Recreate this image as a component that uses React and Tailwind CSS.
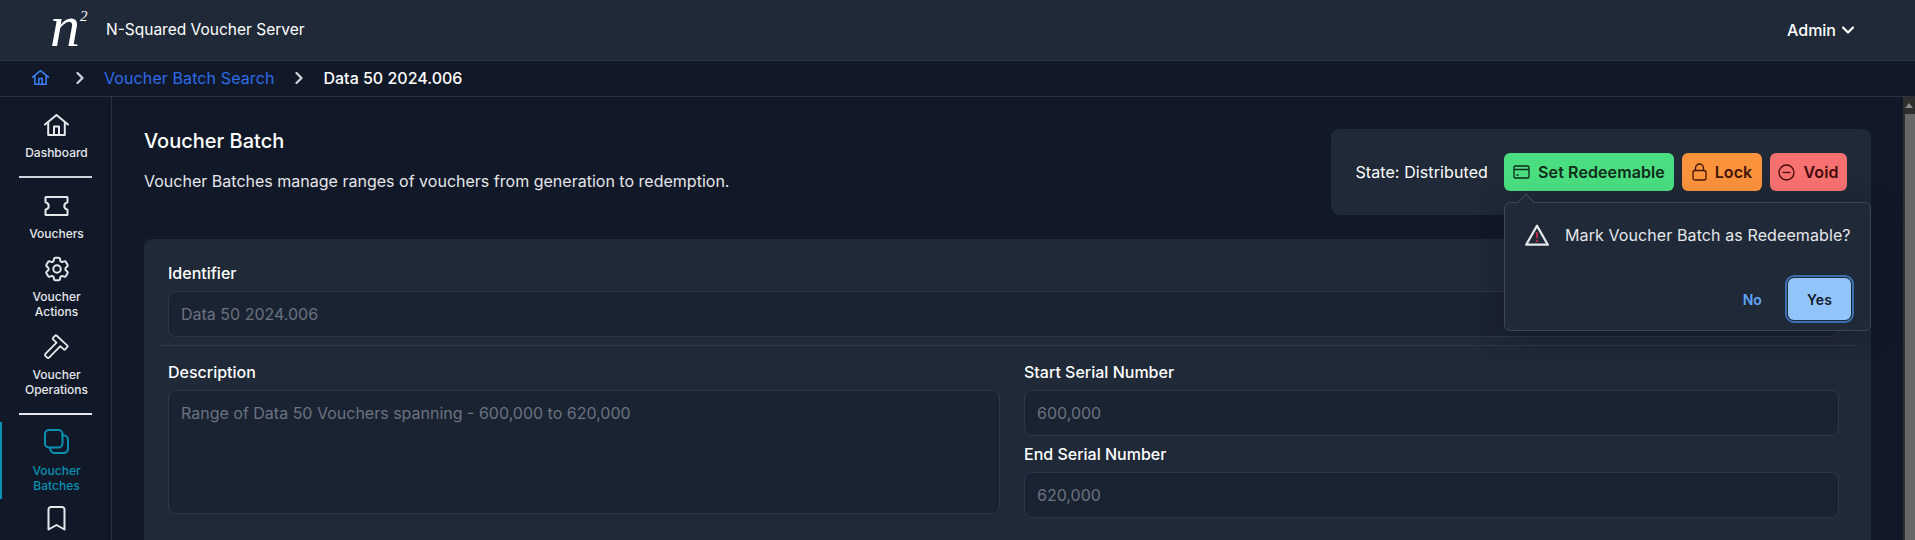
import React from "react";
import { HiOutlineCog6Tooth } from "react-icons/hi2";

function Home({ className, sw = 2 }) {
  return (
    <svg viewBox="0 0 25 22" fill="none" stroke="currentColor" strokeWidth={sw} strokeLinejoin="round" strokeLinecap="round" className={className}>
      <path d="M1 10.5 12.5 1 24 10.5" />
      <path d="M4.2 8.5V21h16.6V8.5" />
      <path d="M10 21v-8.5h5V21" />
    </svg>
  );
}
function Ticket({ className }) {
  return (
    <svg viewBox="0 0 25 20" fill="none" stroke="currentColor" strokeWidth="2" strokeLinejoin="round" className={className}>
      <path d="M2 1h21a.5.5 0 0 1 .5.5v4.7c-2.2.6-3.2 2-3.2 3.8s1 3.2 3.2 3.8v4.7a.5.5 0 0 1-.5.5H2a.5.5 0 0 1-.5-.5v-4.7c2.2-.6 3.2-2 3.2-3.8s-1-3.2-3.2-3.8V1.500A.5.5 0 0 1 2 1z" />
    </svg>
  );
}
function Hammer({ className }) {
  return (
    <svg viewBox="0 0 26 26" fill="none" stroke="currentColor" strokeWidth="1.9" strokeLinejoin="round" className={className}>
      <path d="M11.600 1.600a1 1 0 0 1 1.400 0l11.300 10.500a1 1 0 0 1 0 1.400l-2.300 2.500a1 1 0 0 1-1.400 0l-3.600-3.300L5.500 24.300a1.800 1.800 0 0 1-2.500 0l-1.300-1.300a1.800 1.800 0 0 1 0-2.500L13 9 9.400 5.500a1 1 0 0 1 0-1.400z" />
    </svg>
  );
}
function Stack({ className }) {
  return (
    <svg viewBox="0 0 25 25" fill="none" stroke="currentColor" strokeWidth="2" strokeLinecap="round" className={className}>
      <rect x="1" y="1" width="17.500" height="17.500" rx="4" />
      <path d="M18.200 6.300h1.300a4.500 4.500 0 0 1 4.500 4.500v8.700a4.500 4.500 0 0 1-4.500 4.500h-8.700a4.500 4.500 0 0 1-4.500-4.500v-1" />
    </svg>
  );
}
function Bookmark({ className }) {
  return (
    <svg viewBox="0 0 19 25" fill="none" stroke="currentColor" strokeWidth="2" strokeLinejoin="round" className={className}>
      <path d="M1.500 3.500a2.500 2.500 0 0 1 2.500-2.500h11a2.500 2.500 0 0 1 2.500 2.500V23.500l-8-4.500-8 4.500z" />
    </svg>
  );
}
function Chevron({ className, d, sw = 2.2 }) {
  return (
    <svg viewBox="0 0 12 12" fill="none" stroke="currentColor" strokeWidth={sw} strokeLinecap="round" strokeLinejoin="round" className={className}>
      <path d={d} />
    </svg>
  );
}
function Card({ className }) {
  return (
    <svg viewBox="0 0 17 14" fill="none" stroke="currentColor" strokeWidth="1.300" className={className}>
      <rect x="1" y="1" width="15" height="12" rx="1.300" />
      <path d="M1 4.500h15M3.500 10h2" />
    </svg>
  );
}
function Lock({ className }) {
  return (
    <svg viewBox="0 0 15 18" fill="none" stroke="currentColor" strokeWidth="1.300" className={className}>
      <rect x="1" y="7.500" width="13" height="9.500" rx="2" />
      <path d="M3.500 7.500V5a4 4 0 0 1 8 0v2.500" />
    </svg>
  );
}
function MinusCircle({ className }) {
  return (
    <svg viewBox="0 0 17 17" fill="none" stroke="currentColor" strokeWidth="1.300" className={className}>
      <circle cx="8.500" cy="8.500" r="7.500" />
      <path d="M4.500 8.500h8" />
    </svg>
  );
}
function Warning({ className }) {
  return (
    <svg viewBox="0 0 24 22" fill="none" className={className}>
      <path d="M12 1.800 22.800 20.700H1.200z" stroke="#e5e7eb" strokeWidth="2.300" strokeLinejoin="round" />
      <path d="M12 8v6.500M12 16v2" stroke="#b02a45" strokeWidth="2" />
    </svg>
  );
}

function NavItem({ icon, label, active, className, gap }) {
  return (
    <div className={`flex flex-col items-center border-l-2 tracking-normal ${active ? "border-[#0891b2] text-[#0891b2]" : "border-transparent text-[#e5e7eb]"} ${className}`}>
      {icon}
      {label && <span className={`${gap} w-[80px] text-center text-[12px] leading-[15px] font-medium`}>{label}</span>}
    </div>
  );
}

function Field({ label, value, className, area }) {
  return (
    <div className={className}>
      <div className="text-[16px] leading-[24px] font-medium tracking-normal text-white">{label}</div>
      <div className={`mt-[6px] flex rounded-lg border border-[#2d3748] bg-[#1a2332] px-3 text-[16px] tracking-normal text-[#6b7280] ${area ? "h-[124px] items-start pt-[10px]" : "h-[46px] items-center"}`}>{value}</div>
    </div>
  );
}

export default function App() {
  return (
    <div className="flex h-[540px] w-full flex-col overflow-hidden bg-[#111827] font-['Inter',sans-serif] tracking-[0.1px] text-white">
      <header className="flex h-[60px] shrink-0 items-center bg-[#1f2937] pr-[61px] pl-[50px]">
        <div className="flex h-[60px] w-[56px] items-start font-['Liberation_Serif',serif] tracking-normal italic">
          <span className="text-[60px] leading-[52px]">n</span>
          <span className="mt-[9px] text-[15px] leading-[15px]">2</span>
        </div>
        <div className="pb-[1px] text-[15.5px] tracking-normal">N-Squared Voucher Server</div>
        <div className="ml-auto flex items-center gap-[6px] pb-[1px] text-[16px] font-medium tracking-normal">
          Admin <Chevron className="h-[12px] w-[12px]" d="M1 3.500 6 8.500 11 3.500" />
        </div>
      </header>

      <nav className="flex h-[37px] shrink-0 items-center border-y border-[#2a3342] bg-[#111827] pb-[2px] pl-[32px] text-[16px]">
        <Home className="h-[15px] w-[17px] text-[#3b82f6]" sw={2.2} />
        <Chevron className="mr-[18px] ml-[25px] h-[12px] w-[12px] text-[#d1d5db]" d="M3.500 1 8.500 6 3.500 11" />
        <span className="text-[#2d6cea]">Voucher Batch Search</span>
        <Chevron className="ml-[19px] mr-[18px] h-[12px] w-[12px] text-[#d1d5db]" d="M3.500 1 8.500 6 3.500 11" />
        <span className="font-medium tracking-normal">Data 50 2024.006</span>
      </nav>

      <div className="flex min-h-0 flex-1">
        <aside className="w-[112px] shrink-0 overflow-hidden border-r border-[#2a3342]">
          <NavItem className="pt-[17px]" gap="mt-[9px]" icon={<Home className="h-[22px] w-[25px]" />} label="Dashboard" />
          <div className="mx-[19px] mt-[16px] h-[2px] bg-[#d1d5db]" />
          <NavItem className="pt-[18px]" gap="mt-[10px]" icon={<Ticket className="h-[20px] w-[25px]" />} label="Vouchers" />
          <NavItem className="pt-[13px]" gap="mt-[5px]" icon={<HiOutlineCog6Tooth className="h-[30px] w-[30px] stroke-[1.6]" />} label="Voucher Actions" />
          <NavItem className="pt-[15px]" gap="mt-[8px]" icon={<Hammer className="h-[25px] w-[25px]" />} label="Voucher Operations" />
          <div className="mx-[19px] mt-[16px] h-[2px] bg-[#e5e7eb]" />
          <NavItem active className="mt-[7px] pt-[7px] pb-[6px]" gap="mt-[9px]" icon={<Stack className="h-[25px] w-[25px]" />} label="Voucher Batches" />
          <NavItem className="pt-[7px]" icon={<Bookmark className="h-[25px] w-[19px]" />} />
        </aside>

        <main className="flex min-w-0 flex-1 flex-col overflow-hidden px-[32px]">
          <div className="flex items-start justify-between pt-[30px]">
            <div>
              <h1 className="text-[20px] leading-[28px] font-medium tracking-normal">Voucher Batch</h1>
              <p className="mt-[14px] text-[16px] leading-[24px] tracking-[0.01px] text-[#e5e7eb]">Voucher Batches manage ranges of vouchers from generation to redemption.</p>
            </div>
            <div className="mt-[2px] flex h-[86px] items-start rounded-lg bg-[#1f2937] px-[24px] pt-[24px]">
              <div className="flex h-[38px] items-center">
                <span className="mr-[16px] text-[16px]">State: Distributed</span>
                <div className="relative flex gap-2">
                  <button className="flex h-[38px] w-[170px] items-center justify-center gap-2 rounded-md bg-[#4ade80] text-[16px] font-semibold text-[#0f2a1a]">
                    <Card className="h-[14px] w-[17px]" />Set Redeemable
                  </button>
                  <button className="flex h-[38px] w-[80px] items-center justify-center gap-2 rounded-md bg-[#fb923c] text-[16px] font-semibold text-[#431407]">
                    <Lock className="h-[18px] w-[15px]" />Lock
                  </button>
                  <button className="flex h-[38px] w-[77px] items-center justify-center gap-2 rounded-md bg-[#f87171] text-[16px] font-semibold text-[#450a0a]">
                    <MinusCircle className="h-[17px] w-[17px]" />Void
                  </button>
                  <div className="absolute top-[49px] left-0 z-10 h-[129px] w-[367px] rounded-md border border-[#3b4656] bg-[#1f2937] shadow-[0_4px_30px_rgba(0,0,0,0.25)]">
                    <div className="absolute top-[-7px] left-[15px] h-[12px] w-[12px] rotate-45 border-t border-l border-[#3b4656] bg-[#1f2937]" />
                    <div className="flex items-center pt-[20px] pl-[20px]">
                      <Warning className="h-[22px] w-[24px]" />
                      <span className="ml-[16px] text-[16px] whitespace-nowrap text-[#e5e7eb]">Mark Voucher Batch as Redeemable?</span>
                    </div>
                    <div className="mt-[31px] flex items-center justify-end pr-[19px]">
                      <span className="mr-[26px] text-[14px] font-semibold text-[#60a5fa]">No</span>
                      <button className="h-[42px] w-[63px] rounded-md bg-[#93c5fd] text-[14px] font-semibold text-[#111827] outline-2 outline-offset-1 outline-[#3b6fb0]">Yes</button>
                    </div>
                  </div>
                </div>
              </div>
            </div>
          </div>

          <section className="mt-[24px] flex-1 rounded-t-lg bg-[#1f2937] px-[16px] pt-[22px]">
            <Field label="Identifier" value="Data 50 2024.006" className="pr-[16px] pb-[8px] pl-[8px]" />
            <div className="h-[1px] bg-[#2d3748]" />
            <div className="flex gap-[24px] pt-[14px] pr-[16px] pl-[8px]">
              <Field area label="Description" value="Range of Data 50 Vouchers spanning - 600,000 to 620,000" className="w-[832px] shrink-0" />
              <div className="flex-1">
                <Field label="Start Serial Number" value="600,000" />
                <Field label="End Serial Number" value="620,000" className="mt-[6px]" />
              </div>
            </div>
          </section>
        </main>

        <div className="flex w-[12px] shrink-0 flex-col items-end bg-[#2e2e2e]">
          <div className="flex h-[17px] w-full items-center justify-center">
            <div className="h-0 w-0 border-x-[4px] border-b-[5px] border-x-transparent border-b-[#8a8a8a]" />
          </div>
          <div className="w-[10px] flex-1 bg-[#686868]" />
        </div>
      </div>
    </div>
  );
}
